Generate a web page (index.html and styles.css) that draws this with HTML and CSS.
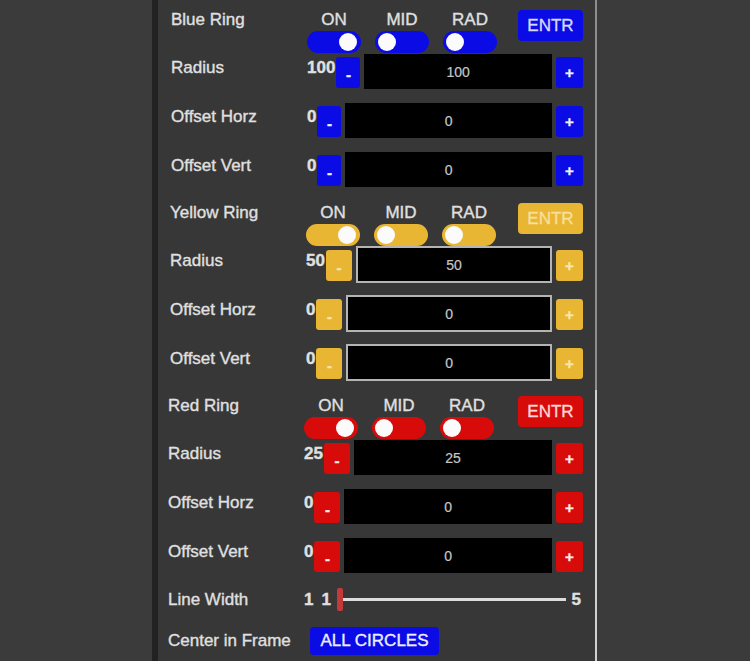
FILE: index.html
```html
<!DOCTYPE html>
<html>
<head>
<meta charset="utf-8">
<link rel="stylesheet" href="styles.css">
</head>
<body>
<div class="frame">
  <div class="stripe-left"></div>
  <div class="panel">

    <section class="ring ring-blue">
      <div class="head">
        <div class="label">Blue Ring</div>
        <div class="toggles">
          <div class="tg"><div class="tg-name">ON</div><div class="pill on"><span class="knob"></span></div></div>
          <div class="tg"><div class="tg-name">MID</div><div class="pill"><span class="knob"></span></div></div>
          <div class="tg"><div class="tg-name">RAD</div><div class="pill"><span class="knob"></span></div></div>
        </div>
        <button class="entr">ENTR</button>
      </div>
      <div class="ctl"><div class="label">Radius</div><div class="val">100</div><button class="btn minus">-</button><div class="field">100</div><button class="btn plus">+</button></div>
      <div class="ctl"><div class="label">Offset Horz</div><div class="val">0</div><button class="btn minus">-</button><div class="field">0</div><button class="btn plus">+</button></div>
      <div class="ctl"><div class="label">Offset Vert</div><div class="val">0</div><button class="btn minus">-</button><div class="field">0</div><button class="btn plus">+</button></div>
    </section>

    <section class="ring ring-yellow">
      <div class="head">
        <div class="label">Yellow Ring</div>
        <div class="toggles">
          <div class="tg"><div class="tg-name">ON</div><div class="pill on"><span class="knob"></span></div></div>
          <div class="tg"><div class="tg-name">MID</div><div class="pill"><span class="knob"></span></div></div>
          <div class="tg"><div class="tg-name">RAD</div><div class="pill"><span class="knob"></span></div></div>
        </div>
        <button class="entr">ENTR</button>
      </div>
      <div class="ctl"><div class="label">Radius</div><div class="val">50</div><button class="btn minus">-</button><div class="field">50</div><button class="btn plus">+</button></div>
      <div class="ctl"><div class="label">Offset Horz</div><div class="val">0</div><button class="btn minus">-</button><div class="field">0</div><button class="btn plus">+</button></div>
      <div class="ctl"><div class="label">Offset Vert</div><div class="val">0</div><button class="btn minus">-</button><div class="field">0</div><button class="btn plus">+</button></div>
    </section>

    <section class="ring ring-red">
      <div class="head">
        <div class="label">Red Ring</div>
        <div class="toggles">
          <div class="tg"><div class="tg-name">ON</div><div class="pill on"><span class="knob"></span></div></div>
          <div class="tg"><div class="tg-name">MID</div><div class="pill"><span class="knob"></span></div></div>
          <div class="tg"><div class="tg-name">RAD</div><div class="pill"><span class="knob"></span></div></div>
        </div>
        <button class="entr">ENTR</button>
      </div>
      <div class="ctl"><div class="label">Radius</div><div class="val">25</div><button class="btn minus">-</button><div class="field">25</div><button class="btn plus">+</button></div>
      <div class="ctl"><div class="label">Offset Horz</div><div class="val">0</div><button class="btn minus">-</button><div class="field">0</div><button class="btn plus">+</button></div>
      <div class="ctl"><div class="label">Offset Vert</div><div class="val">0</div><button class="btn minus">-</button><div class="field">0</div><button class="btn plus">+</button></div>
    </section>

    <div class="lw-row">
      <div class="label">Line Width</div>
      <div class="val">1</div>
      <div class="lw-min">1</div>
      <div class="slider"><span class="thumb"></span><span class="track"></span></div>
      <div class="lw-max">5</div>
    </div>

    <div class="cf-row">
      <div class="label">Center in Frame</div>
      <button class="all">ALL CIRCLES</button>
    </div>

  </div>
  <div class="stripe-right"></div>
</div>
</body>
</html>
```

FILE: styles.css
```css
html, body {
  margin: 0;
  padding: 0;
}
body {
  background: #3b3b3b;
  height: 661px;
  overflow: hidden;
  font-family: "Liberation Sans", Arial, sans-serif;
  color: #e0e0e0;
  font-size: 17px;
  -webkit-text-stroke: 0.35px currentColor;
}
.frame {
  display: flex;
  height: 661px;
  padding-left: 152px;
}
.stripe-left {
  width: 6px;
  background: #222222;
}
.panel {
  width: 412px;
  background: #373737;
  padding: 10px 12px 0 13px;
}
.stripe-right {
  width: 2px;
  background: linear-gradient(#8e8e8e 0 390px, #cfcfcf 390px 661px);
}

.ring {
  display: flex;
  flex-direction: column;
  margin-bottom: 2px;
}
.ring-yellow { margin-left: -1px; }
.ring-red { margin-left: -3px; }
.lw-row, .cf-row { margin-left: -3px; }

.label {
  width: 136px;
  flex: none;
  line-height: 20px;
  white-space: nowrap;
}

.head {
  display: flex;
  align-items: flex-start;
  height: 44px;
}
.toggles {
  display: flex;
  gap: 14px;
}
.tg {
  width: 54px;
  display: flex;
  flex-direction: column;
  align-items: center;
}
.tg-name {
  line-height: 20px;
  height: 20px;
  margin-bottom: 1px;
}
.pill {
  width: 54px;
  height: 22px;
  border-radius: 11px;
  display: flex;
  align-items: center;
  padding: 0 3px;
  box-sizing: border-box;
}
.pill.on { justify-content: flex-end; padding-right: 4px; }
.knob {
  width: 18px;
  height: 18px;
  border-radius: 50%;
  background: #fbfbfb;
}
.entr {
  margin-left: auto;
  width: 65px;
  height: 31px;
  border: none;
  border-radius: 4px;
  font-family: inherit;
  font-size: 17px;
  padding: 0;
  -webkit-text-stroke: 0.35px currentColor;
}

.ctl {
  display: flex;
  align-items: flex-start;
  height: 49px;
}
.ctl .label { padding-top: 4px; }
.val {
  font-weight: bold;
  line-height: 20px;
  padding-top: 4px;
  margin-right: 1px;
}
.btn {
  border: none;
  border-radius: 3px;
  padding: 0;
  margin-top: 3px;
  height: 31px;
  font-family: inherit;
  font-weight: bold;
  font-size: 15px;
}
.minus { width: 24px; padding-top: 3px; }
.plus { width: 27px; margin-left: 4px; }
.field {
  flex: 1;
  margin-left: 4px;
  height: 35px;
  background: #000;
  color: #c6c6c6;
  font-size: 14px;
  -webkit-text-stroke: 0.2px currentColor;
  display: flex;
  align-items: center;
  justify-content: center;
  box-sizing: border-box;
}

/* colour themes */
.ring-blue .pill, .ring-blue .entr, .ring-blue .btn { background: #0b0be6; }
.ring-blue .entr { color: #d8d8ff; }
.ring-blue .btn { color: #f0f0ff; }

.ring-yellow .pill, .ring-yellow .entr, .ring-yellow .btn { background: #e8b633; }
.ring-yellow .entr { color: #f8df9c; }
.ring-yellow .btn { color: #f9e6b0; }
.ring-yellow .minus { width: 26px; }
.ring-yellow .field { border: 2px solid #b4b4b4; height: 37px; margin-top: -1px; }

.ring-red .pill, .ring-red .entr, .ring-red .btn { background: #d80b0b; }
.ring-red .entr { color: #ffd6d6; }
.ring-red .btn { color: #ffeaea; }
.ring-red .minus { width: 26px; }

/* line width */
.lw-row {
  display: flex;
  align-items: center;
  height: 21px;
}
.lw-row .val { padding-top: 0; margin-right: 0; }
.lw-min {
  font-weight: bold;
  margin-left: 8px;
}
.slider {
  flex: 1;
  display: flex;
  align-items: center;
  margin-left: 6px;
  height: 23px;
}
.thumb {
  width: 6px;
  height: 23px;
  background: #c43a3a;
  border-radius: 2px;
}
.track {
  flex: 1;
  height: 3px;
  background: #dcdcdc;
}
.lw-max {
  font-weight: bold;
  margin-left: 6px;
  margin-right: 2px;
}

/* center in frame */
.cf-row {
  display: flex;
  align-items: center;
  margin-top: 17px;
}
.all {
  margin-left: 6px;
  height: 28px;
  width: 129px;
  padding: 0;
  border: none;
  border-radius: 4px;
  background: #0b0be6;
  color: #eeeeff;
  font-family: inherit;
  font-size: 17px;
  -webkit-text-stroke: 0.35px currentColor;
}
```
